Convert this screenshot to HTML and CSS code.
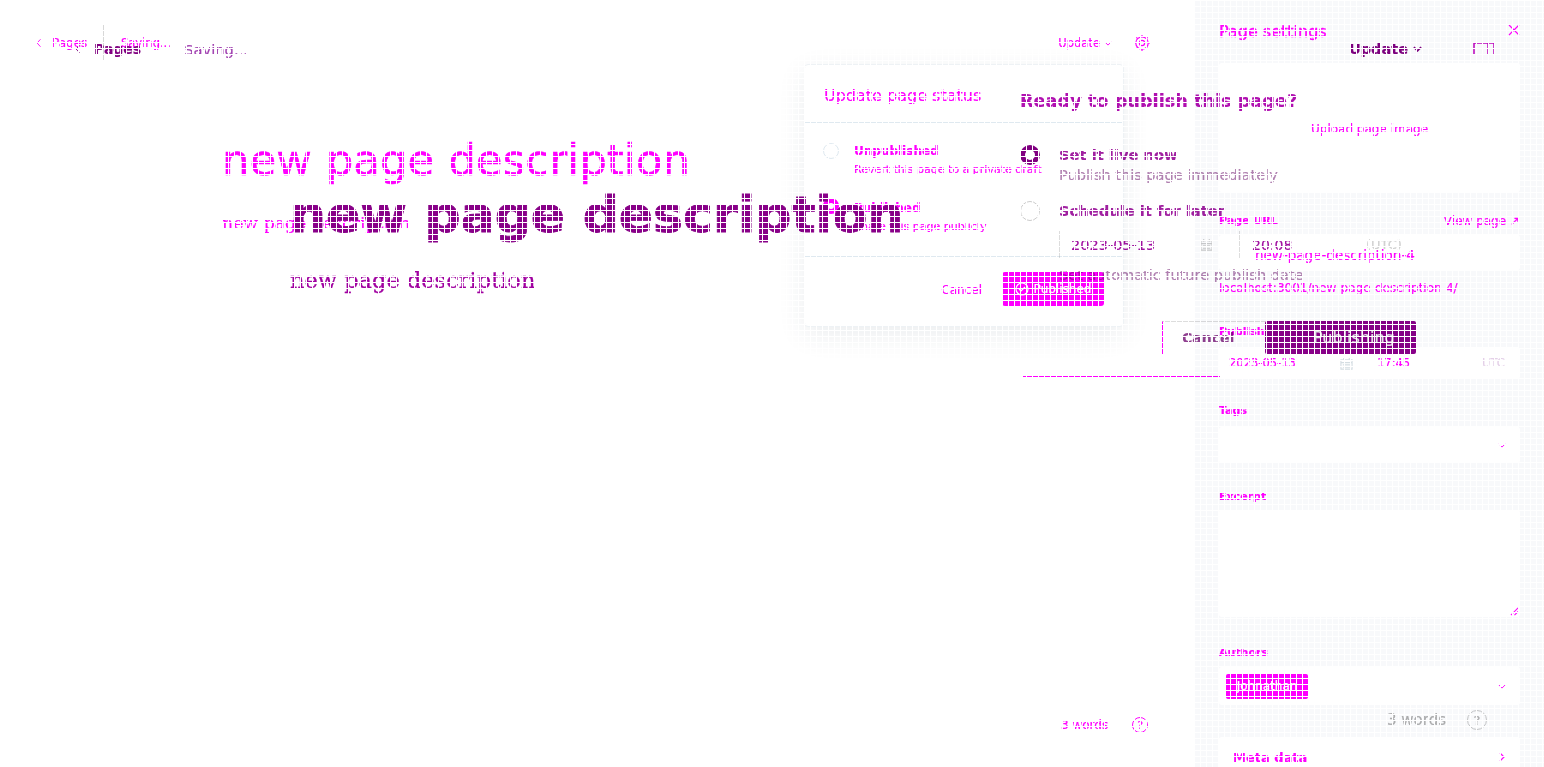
FILE: index.html
```html
<!DOCTYPE html>
<html lang="en">
<head>
<meta charset="utf-8">
<title>Page editor</title>
<link rel="stylesheet" href="styles.css">
</head>
<body>
<div class="editor">
  <div class="workspace">
    <header class="top">
      <span class="back"><svg class="ic-back" viewBox="0 0 8 12"><path d="M6 1 1.500 6 6 11"/></svg>Pages</span>
      <span class="rule"></span>
      <span class="saving">Saving...</span>
      <span class="top-right">
        <span class="update">Update <svg class="ic-chev" viewBox="0 0 10 6"><path d="M1 1l4 4 4-4"/></svg></span>
        <svg class="ic-gear" viewBox="0 0 18 18"><circle cx="9" cy="9" r="2.600"/><circle cx="9" cy="9" r="6.200"/><path d="M9 1v1.800M9 15.200V17M1 9h1.800M15.200 9H17M3.300 3.300l1.300 1.300M13.400 13.400l1.300 1.300M3.300 14.700l1.300-1.300M13.400 4.600l1.300-1.300"/></svg>
      </span>
    </header>
    <main class="doc">
      <h1 class="doc-title">new page description</h1>
      <p class="doc-text">new page description</p>
    </main>
    <footer class="count">
      <span>3 words</span>
      <span class="help">?</span>
    </footer>
  </div>
  <aside class="settings">
    <div class="settings-head">
      <h2>Page settings</h2>
      <svg class="ic-x" viewBox="0 0 12 12"><path d="M1 1l10 10M11 1 1 11"/></svg>
    </div>
    <div class="image-box"><span>Upload page image</span></div>
    <div class="label-row label-url"><label>Page URL</label><span class="view">View page ↗</span></div>
    <div class="field field-url">new-page-description-4</div>
    <p class="hint">localhost:3001/new-page-description-4/</p>
    <label class="lbl-publish">Publish date</label>
    <div class="field field-date">
      <span class="d">2023-05-13</span>
      <svg class="ic-cal" viewBox="0 0 14 14"><path d="M1 3h12v10H1zM1 6h12M4 1v3M10 1v3M3 8.500h8M3 11h8"/></svg>
      <span class="t">17:45</span>
      <span class="z">UTC</span>
    </div>
    <label class="lbl-tags">Tags</label>
    <div class="field field-select"><svg class="ic-chev2" viewBox="0 0 10 6"><path d="M1 1l4 4 4-4"/></svg></div>
    <label class="lbl-excerpt">Excerpt</label>
    <div class="field field-area"><svg class="ic-hatch" viewBox="0 0 10 10"><path d="M1 9l8-8M5 9l4-4"/></svg></div>
    <label class="lbl-authors">Authors</label>
    <div class="field field-authors">
      <span class="tag">Johnathan</span>
      <svg class="ic-chev2" viewBox="0 0 10 6"><path d="M1 1l4 4 4-4"/></svg>
    </div>
    <div class="field field-meta"><span>Meta data</span><svg class="ic-right" viewBox="0 0 6 10"><path d="M1 1l4 4-4 4"/></svg></div>
  </aside>
</div>

<section class="popover">
  <h3>Update page status</h3>
  <div class="pop-body">
    <div class="option">
      <span class="radio"></span>
      <div><strong>Unpublished</strong><small>Revert this page to a private draft</small></div>
    </div>
    <div class="option">
      <span class="radio on"></span>
      <div><strong>Published</strong><small>Share this page publicly</small></div>
    </div>
  </div>
  <div class="pop-foot">
    <span class="pop-cancel">Cancel</span>
    <span class="pop-btn"><svg class="ic-check" viewBox="0 0 14 14"><circle cx="7" cy="7" r="6"/><path d="M4 7l2 2 4-4"/></svg>Published</span>
  </div>
</section>

<div class="ghost">
  <header class="g-top">
    <svg class="g-back" viewBox="0 0 8 12"><path d="M6 1 1.500 6 6 11"/></svg>
    <span class="g-pages">Pages</span>
    <span class="g-saving">Saving...</span>
    <span class="g-update">Update <svg class="g-chev" viewBox="0 0 10 6"><path d="M1 1l4 4 4-4"/></svg></span>
    <svg class="g-panel" viewBox="0 0 22 14"><path d="M1 13V1h20v12M15 1v12"/></svg>
  </header>
  <div class="g-doc">
    <h1>new page description</h1>
    <p>new page description</p>
  </div>
  <section class="modal">
    <h2>Ready to publish this page?</h2>
    <div class="m-option">
      <span class="m-radio on"></span>
      <div><strong>Set it live now</strong><small>Publish this page immediately</small></div>
    </div>
    <div class="m-option m-second">
      <span class="m-radio"></span>
      <div>
        <strong>Schedule it for later</strong>
        <div class="m-date">
          <span class="m-d">2023-05-13</span>
          <svg class="g-cal" viewBox="0 0 14 14"><path d="M1 3h12v10H1zM1 6h12M4 1v3M10 1v3M3 8.500h8M3 11h8"/></svg>
          <span class="m-t">20:08</span>
          <span class="m-z">(UTC)</span>
        </div>
        <small>Set automatic future publish date</small>
      </div>
    </div>
    <div class="m-foot">
      <span class="m-cancel">Cancel</span>
      <span class="m-btn">Publishing</span>
    </div>
    <div class="m-line"></div>
  </section>
  <footer class="g-count"><span>3 words</span><span class="g-help">?</span></footer>
</div>

<div class="mask"></div>
</body>
</html>
```
FILE: styles.css
```css
* { box-sizing: border-box; }
html, body { margin: 0; height: 767px; overflow: hidden; background: #fff; }
body { position: relative; font-family: "DejaVu Sans", sans-serif; color: #f0f; -webkit-text-stroke: .2px; }
svg { fill: none; stroke: currentColor; stroke-width: 1.200; display: block; flex: none; }
h1, h2, h3, p { margin: 0; font-weight: 400; }
label { display: block; font-size: 11px; font-weight: 700; line-height: 14px; }

.mask {
  position: absolute; inset: 0; z-index: 9; pointer-events: none;
  background:
    linear-gradient(#fff 1px, transparent 1px) 0 0 / 6px 6px,
    linear-gradient(90deg, #fff 1px, transparent 1px) 0 0 / 6px 6px;
}

/* base editor */
.editor { display: flex; height: 767px; }
.workspace { width: 1194px; display: flex; flex-direction: column; }
.top { display: flex; align-items: center; height: 36px; margin-top: 25px; padding: 0 43px 0 36px; font-size: 12px; }
.back { display: flex; align-items: center; gap: 10px; width: 67px; }
.ic-back { width: 6px; height: 10px; }
.rule { width: 1px; height: 36px; background: #d8d8d8; }
.saving { margin-left: 17px; font-size: 11.500px; }
.top-right { margin-left: auto; display: flex; align-items: center; gap: 21px; }
.update { display: flex; align-items: center; gap: 4px; font-size: 11.500px; }
.ic-chev { width: 8px; height: 5px; }
.ic-gear { width: 18px; height: 18px; }
.doc { padding: 75px 0 0 222px; }
.doc-title { font-size: 43.500px; line-height: 48px; -webkit-text-stroke: .5px; }
.doc-text { font-family: "DejaVu Serif", serif; font-size: 17.300px; line-height: 24px; margin-top: 27px; }
.count { margin-top: auto; display: flex; align-items: center; gap: 24px; padding: 0 0 34px 1061px; font-size: 12px; }
.help { width: 16px; height: 16px; border: 1px solid #f0f; border-radius: 50%; font-size: 11px; display: grid; place-items: center; }

/* settings */
.settings { width: 350px; background: #f8f9fb; padding: 0 24px 0 25px; display: flex; flex-direction: column; }
.settings > * { flex: none; }
.settings-head { display: flex; justify-content: space-between; align-items: center; height: 63px; padding: 0 1px 0 0; }
.settings-head h2 { font-size: 16px; font-weight: 400; -webkit-text-stroke: .4px; }
.ic-x { width: 12px; height: 12px; margin-bottom: 4px; margin-right: -1px; }
.image-box { height: 129px; background: #fff; border-radius: 3px; display: grid; place-items: center; font-size: 12px; padding-top: 3px; }
.label-row { display: flex; justify-content: space-between; align-items: center; }
.label-url { margin-top: 22px; height: 14px; }
.view { font-size: 12px; }
.field { background: #fff; border-radius: 3px; }
.field-url { margin-top: 7px; height: 35px; padding: 13px 0 0 36px; font-size: 13.500px; line-height: 14px; }
.hint { font-size: 12px; line-height: 14px; margin-top: 11px; }
.lbl-publish { margin-top: 30px; }
.field-date { margin-top: 8px; height: 32px; display: flex; align-items: center; padding-left: 10px; font-size: 11.500px; }
.d { width: 111px; }
.ic-cal { width: 13px; height: 13px; color: #d4dde2; }
.t { margin-left: 24px; width: 105px; }
.z { color: #e4d0e8; }
.lbl-tags { margin-top: 25px; }
.field-select { margin-top: 9px; height: 36px; display: flex; align-items: center; justify-content: flex-end; padding-right: 14px; }
.ic-chev2 { width: 8px; height: 5px; }
.lbl-excerpt { margin-top: 27px; }
.field-area { margin-top: 6px; height: 107px; display: flex; align-items: flex-end; justify-content: flex-end; padding: 0 1px 1px 0; }
.ic-hatch { width: 9px; height: 9px; }
.lbl-authors { margin-top: 29px; }
.field-authors { margin-top: 7px; height: 38px; display: flex; align-items: center; justify-content: space-between; padding: 0 14px 0 7px; }
.tag { width: 82px; height: 25px; background: #f0f; color: #fff; border-radius: 2px; font-size: 12px; display: grid; place-items: center; }
.field-meta { margin-top: 32px; height: 40px; display: flex; align-items: center; justify-content: space-between; padding: 0 15px 0 14px; font-size: 13px; font-weight: 700; }
.ic-right { width: 6px; height: 10px; }

/* status popover */
.popover { position: absolute; left: 804px; top: 64px; width: 320px; height: 263px; background: #fff; border: 1px solid #eef2f5; border-radius: 4px; box-shadow: 0 8px 28px rgba(30, 50, 80, .09); display: flex; flex-direction: column; }
.popover h3 { height: 58px; padding: 21px 19px 0; font-size: 16px; line-height: 20px; border-bottom: 1px solid #dfe9f0; }
.pop-body { height: 134px; border-bottom: 1px solid #dfe9f0; padding: 19px 0 0 18px; display: flex; flex-direction: column; gap: 19px; }
.option { display: flex; gap: 15px; }
.option strong { display: block; font-size: 12px; line-height: 18px; }
.option small { display: block; font-size: 11px; line-height: 20px; white-space: nowrap; }
.radio { width: 16px; height: 16px; border: 1px solid #dfe9f0; border-radius: 50%; margin-top: 1px; }
.radio.on { border: 5px solid #f0f; background: #fff; margin-top: -1px; }
.pop-foot { flex: 1; display: flex; align-items: center; justify-content: flex-end; gap: 20px; padding: 0 19px 5px 0; font-size: 12px; }
.pop-cancel { margin-top: 2px; }
.pop-btn { width: 102px; height: 34px; background: #f0f; color: #fff; border-radius: 3px; display: flex; align-items: center; justify-content: center; gap: 5px; }
.ic-check { width: 14px; height: 14px; }

/* second, overlapping window */
.ghost { position: absolute; inset: 0; z-index: 5; mix-blend-mode: multiply; color: #800080; pointer-events: none; }
.g-top { display: flex; align-items: center; height: 26px; margin-top: 36px; padding: 0 49px 0 75px; font-size: 14px; }
.g-back { width: 6px; height: 10px; }
.g-pages { margin-left: 13px; font-weight: 700; }
.g-saving { margin-left: 43px; font-size: 14.700px; color: #a040b0; }
.g-update { margin-left: auto; display: flex; align-items: center; gap: 5px; font-weight: 700; font-size: 14.500px; }
.g-chev { width: 9px; height: 6px; stroke-width: 2; }
.g-panel { width: 22px; height: 14px; margin-left: 51px; color: #c000c0; stroke-width: 1.500; }
.g-doc { padding: 125px 0 0 290px; }
.g-doc h1 { font-size: 50.500px; line-height: 56px; font-weight: 700; color: #880088; -webkit-text-stroke: .8px; }
.g-doc p { font-family: "DejaVu Serif", serif; font-size: 22.500px; line-height: 28px; margin-top: 23px; color: #a000a0; -webkit-text-stroke: .3px; }
.modal { position: absolute; left: 1020px; top: 88px; width: 420px; height: 289px; }
.modal h2 { font-size: 17.700px; line-height: 26px; font-weight: 700; color: #b010b0; }
.m-option { display: flex; gap: 19px; margin-top: 31px; }
.m-second { margin-top: 16px; }
.m-option strong { display: block; font-size: 14.700px; line-height: 20px; color: #a020a0; }
.m-option small { display: block; font-size: 14.500px; line-height: 20px; color: #b080b0; white-space: nowrap; }
.m-radio { width: 20px; height: 20px; border: 1px solid #ccc; border-radius: 50%; }
.m-radio.on { border: 5px solid #800080; }
.m-date { margin-top: 10px; width: 357px; height: 28px; border-left: 1px solid #ddd; border-bottom: 1px solid #ddd; display: flex; align-items: center; padding-left: 11px; font-size: 14.500px; margin-bottom: 6px; color: #a010a0; }
.m-d { width: 129px; }
.g-cal { width: 13px; height: 13px; color: #ccc; margin-right: 26px; }
.m-t { width: 127px; border-left: 1px solid #ddd; padding-left: 12px; line-height: 28px; font-size: 14px; }
.m-z { color: #d0d0d0; font-size: 13px; }
.m-foot { display: flex; justify-content: flex-end; height: 34px; margin-top: 36px; padding-right: 24px; }
.m-cancel { width: 103px; height: 34px; border: 1px solid #ddd; border-left-color: #f0f; border-right: 0; padding-left: 19px; font-size: 14px; font-weight: 700; line-height: 32px; color: #904090; }
.m-btn { width: 151px; height: 33px; background: #880088; color: #e8e8e8; border-radius: 2px; padding-left: 48px; line-height: 33px; font-size: 16px; }
.m-line { margin-top: 21px; margin-left: 3px; height: 1px; background: #f0f; width: 197px; }
.g-count { position: absolute; left: 1387px; top: 710px; display: flex; align-items: center; gap: 21px; font-size: 15px; color: #b0b0b0; }
.g-help { width: 20px; height: 20px; border: 1px solid #c8c8c8; border-radius: 50%; display: grid; place-items: center; font-size: 13px; }
```
